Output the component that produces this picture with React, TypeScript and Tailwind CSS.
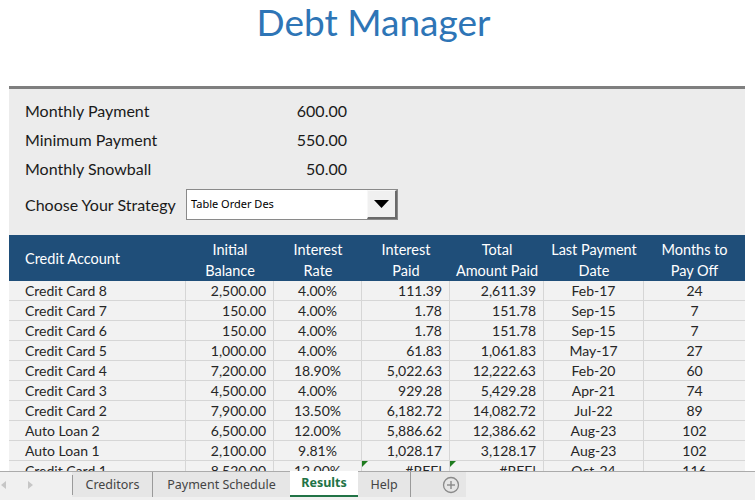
import React from "react";

type Row = {
  name: string;
  balance: string;
  rate: string;
  paid: string;
  total: string;
  date: string;
  months: string;
  flag?: boolean;
};

const rows: Row[] = [
  { name: "Credit Card 8", balance: "2,500.00", rate: "4.00%", paid: "111.39", total: "2,611.39", date: "Feb-17", months: "24" },
  { name: "Credit Card 7", balance: "150.00", rate: "4.00%", paid: "1.78", total: "151.78", date: "Sep-15", months: "7" },
  { name: "Credit Card 6", balance: "150.00", rate: "4.00%", paid: "1.78", total: "151.78", date: "Sep-15", months: "7" },
  { name: "Credit Card 5", balance: "1,000.00", rate: "4.00%", paid: "61.83", total: "1,061.83", date: "May-17", months: "27" },
  { name: "Credit Card 4", balance: "7,200.00", rate: "18.90%", paid: "5,022.63", total: "12,222.63", date: "Feb-20", months: "60" },
  { name: "Credit Card 3", balance: "4,500.00", rate: "4.00%", paid: "929.28", total: "5,429.28", date: "Apr-21", months: "74" },
  { name: "Credit Card 2", balance: "7,900.00", rate: "13.50%", paid: "6,182.72", total: "14,082.72", date: "Jul-22", months: "89" },
  { name: "Auto Loan 2", balance: "6,500.00", rate: "12.00%", paid: "5,886.62", total: "12,386.62", date: "Aug-23", months: "102" },
  { name: "Auto Loan 1", balance: "2,100.00", rate: "9.81%", paid: "1,028.17", total: "3,128.17", date: "Aug-23", months: "102" },
  { name: "Credit Card 1", balance: "8,520.00", rate: "12.00%", paid: "#REF!", total: "#REF!", date: "Oct-24", months: "116", flag: true },
];

const cols = "grid grid-cols-[177px_88px_88px_88px_94px_100px_101px]";

function ErrorMark() {
  return (
    <svg className="absolute left-0 top-0" width="6" height="6" viewBox="0 0 6 6">
      <polygon points="0,0 6,0 0,6" fill="#1e7b1e" />
    </svg>
  );
}

function Cell({ children, align, mark, last }: { children: React.ReactNode; align: "l" | "r" | "c"; mark?: boolean; last?: boolean }) {
  const a = align === "l" ? "justify-start pl-[16px]" : align === "r" ? "justify-end pr-[7px]" : "justify-center";
  return (
    <div className={`relative flex items-center ${a} ${last ? "" : "border-r border-[#d6d6d6]"}`}>
      {mark && <ErrorMark />}
      {children}
    </div>
  );
}

function Summary({ label, value }: { label: string; value: string }) {
  return (
    <div className="flex h-[29px] w-[338px] items-center justify-between pl-[16px] text-[16px] text-[#1a1a1a]">
      <span>{label}</span>
      <span>{value}</span>
    </div>
  );
}

function Tab({ label, width, active, sep }: { label: string; width: string; active?: boolean; sep?: boolean }) {
  if (active) {
    return (
      <div className={`relative -mt-px flex h-[26px] ${width} items-center justify-center border-b-2 border-[#217346] bg-white pt-[1px] text-[12.5px] font-bold text-[#217346]`}>
        {label}
      </div>
    );
  }
  return (
    <div className={`flex h-[25px] ${width} items-center justify-center pt-[2px] text-[12.5px] text-[#444] ${sep ? "border-r border-[#9a9a9a]" : ""}`}>
      {label}
    </div>
  );
}

export default function App() {
  return (
    <div className="flex h-[500px] w-[755px] flex-col overflow-hidden bg-white font-['Lato',sans-serif]">
      <div className="flex-1 overflow-hidden">
        <div className="flex h-[86px] justify-center">
          <h1 className="ml-[-8px] text-[37px] leading-[44px] text-[#2e75b6]">Debt Manager</h1>
        </div>

        <div className="ml-[9px] w-[736px] border-t-[3px] border-[#7f7f7f] bg-[#ececec]">
          <div className="pt-[7px]">
            <Summary label="Monthly Payment" value="600.00" />
            <Summary label="Minimum Payment" value="550.00" />
            <Summary label="Monthly Snowball" value="50.00" />
            <div className="mt-[6px] mb-[15px] flex items-center pl-[16px] text-[16px] text-[#1a1a1a]">
              <span className="w-[161px]">Choose Your Strategy</span>
              <div className="flex h-[31px] w-[212px] border border-[#8a8a8a] bg-white">
                <div className="flex flex-1 items-center pl-[4px] font-['Noto_Sans',sans-serif] text-[11px] text-black">
                  Table Order Des
                </div>
                <div className="flex w-[30px] items-center justify-center border-l border-t border-r-2 border-b-2 border-l-[#f8f8f8] border-t-[#f8f8f8] border-r-[#6a6a6a] border-b-[#6a6a6a] bg-[#f0f0f0]">
                  <svg width="15" height="8" viewBox="0 0 15 8">
                    <polygon points="0,0 15,0 7.5,8" fill="#000" />
                  </svg>
                </div>
              </div>
            </div>
          </div>

          <div className={`${cols} h-[46px] bg-[#1f4e79] text-[14.5px] leading-[21px] text-white`}>
            <div className="flex items-center pl-[16px]">Credit Account</div>
            <div className="pt-[4px] text-center">Initial<br />Balance</div>
            <div className="pt-[4px] text-center">Interest<br />Rate</div>
            <div className="pt-[4px] text-center">Interest<br />Paid</div>
            <div className="pt-[4px] text-center">Total<br />Amount Paid</div>
            <div className="pt-[4px] text-center">Last Payment<br />Date</div>
            <div className="pt-[4px] text-center">Months to<br />Pay Off</div>
          </div>

          {rows.map((r) => (
            <div key={r.name} className={`${cols} h-[20px] border-b border-[#d6d6d6] bg-[#f2f2f2] text-[14px] leading-[19px] text-[#262626]`}>
              <Cell align="l">{r.name}</Cell>
              <Cell align="r">{r.balance}</Cell>
              <Cell align="c">{r.rate}</Cell>
              <Cell align="r" mark={r.flag}>{r.paid}</Cell>
              <Cell align="r" mark={r.flag}>{r.total}</Cell>
              <Cell align="c">{r.date}</Cell>
              <Cell align="c" last>{r.months}</Cell>
            </div>
          ))}
        </div>
      </div>

      <div className="flex h-[29px] flex-none border-t border-[#ababab] bg-[#f0f0f0] font-['Noto_Sans',sans-serif]">
        <div className="flex w-[72px] items-center pb-[3px]">
          <svg className="ml-[1px]" width="5" height="8" viewBox="0 0 5 8">
            <polygon points="5,0 5,8 0,4" fill="#c6c6c6" />
          </svg>
          <svg className="ml-[22px]" width="5" height="8" viewBox="0 0 5 8">
            <polygon points="0,0 0,8 5,4" fill="#c6c6c6" />
          </svg>
        </div>
        <div className="flex h-[25px] w-[394px] items-center bg-[#e6e6e6]">
          <div className="h-[20px] w-px bg-[#9a9a9a]" />
          <Tab label="Creditors" width="w-[80px]" sep />
          <Tab label="Payment Schedule" width="w-[137px]" />
          <Tab label="Results" width="w-[68px]" active />
          <Tab label="Help" width="w-[53px]" sep />
          <div className="flex flex-1 items-center pl-[31px] pt-[1px]">
            <svg width="18" height="18" viewBox="0 0 18 18">
              <circle cx="9" cy="9" r="7.5" fill="none" stroke="#8a8a8a" strokeWidth="1.3" />
              <line x1="9" y1="5" x2="9" y2="13" stroke="#8a8a8a" strokeWidth="1.4" />
              <line x1="5" y1="9" x2="13" y2="9" stroke="#8a8a8a" strokeWidth="1.4" />
            </svg>
          </div>
        </div>
      </div>
    </div>
  );
}
